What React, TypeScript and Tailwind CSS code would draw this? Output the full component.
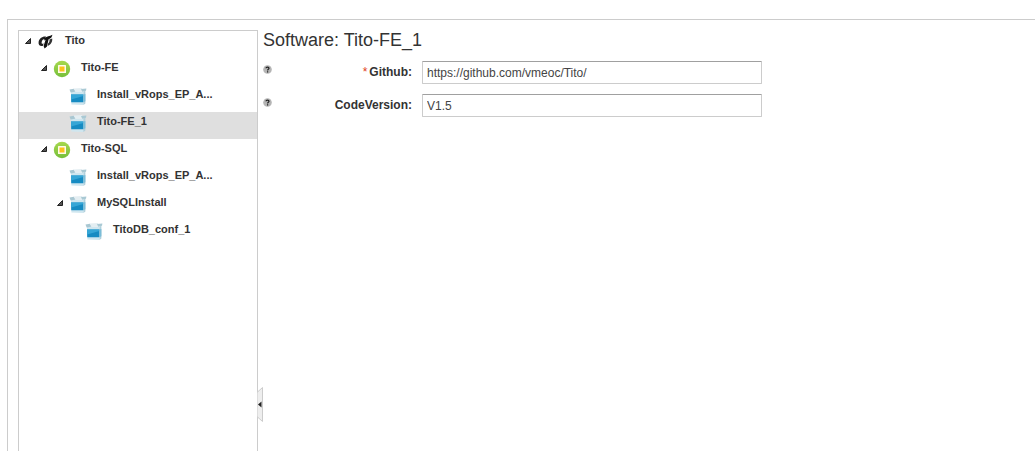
import { useState } from "react";

type NodeKind = "app" | "machine" | "software";

const Nodes: { id: number; name: string; kind: NodeKind; level: number; parent: boolean }[] = [
  { id: 1, name: "Tito", kind: "app", level: 0, parent: true },
  { id: 2, name: "Tito-FE", kind: "machine", level: 1, parent: true },
  { id: 3, name: "Install_vRops_EP_A...", kind: "software", level: 2, parent: false },
  { id: 4, name: "Tito-FE_1", kind: "software", level: 2, parent: false },
  { id: 5, name: "Tito-SQL", kind: "machine", level: 1, parent: true },
  { id: 6, name: "Install_vRops_EP_A...", kind: "software", level: 2, parent: false },
  { id: 7, name: "MySQLInstall", kind: "software", level: 2, parent: true },
  { id: 8, name: "TitoDB_conf_1", kind: "software", level: 3, parent: false },
];

const Fields = [
  { id: "github", label: "Github:", value: "https://github.com/vmeoc/Tito/", required: true },
  { id: "codeVersion", label: "CodeVersion:", value: "V1.5", required: false },
];

const Indents = ["pl-1.5", "pl-[22px]", "pl-[38px]", "pl-[54px]"];

function AppIcon() {
  return (
    <svg width="18" height="18" viewBox="0 0 18 18" fill="none">
      <path d="M9 3.6C5 3.2 2.2 5.8 1.6 9C1.2 12 3 13.6 6 12.8L6.6 10.6C4.8 11.2 4.2 10 4.8 8.4C5.4 6.8 6.6 6 8 6Z" fill="#222" />
      <path d="M15.4 1.8C12.6 3.6 9.8 3.2 7.8 5L7 7.4L8.6 6.8L6.6 13L7.6 15.6L10 13.6L11.6 6.2C13.8 5.6 15 4.2 15.4 1.8Z" fill="#111" />
      <path d="M12.4 6.6L15.2 5.4C15.6 8.8 13.8 11.8 10.6 12.8L11 10.6C12.2 9.6 12.8 8.2 12.4 6.6Z" fill="#333" />
    </svg>
  );
}

function MachineIcon() {
  return (
    <svg width="18" height="18" viewBox="0 0 18 18">
      <defs>
        <linearGradient id="machine" x1="0" y1="0" x2="0" y2="1">
          <stop offset="0" stopColor="#a6d84e" />
          <stop offset="1" stopColor="#76bf3a" />
        </linearGradient>
      </defs>
      <circle cx="9" cy="9" r="8.2" fill="url(#machine)" />
      <rect x="5" y="5" width="8" height="8" rx="0.5" fill="#fffbe8" />
      <rect x="6.5" y="6.5" width="5" height="5" fill="#fcc21c" />
    </svg>
  );
}

function SoftwareIcon() {
  return (
    <svg width="18" height="18" viewBox="0 0 18 18">
      <path d="M2 4.5H14.4V18L2.4 17.4Z" fill="#cfe6ef" />
      <path d="M14.4 4.5L16.4 3.8V16.6L14.4 18Z" fill="#b0d0dc" />
      <path d="M0.5 2.4L5 1.8L7 4.6L1.6 5.6Z" fill="#a9c7d2" />
      <path d="M4.5 1.6L13 1L13.5 4.8L6.5 5Z" fill="#e4eef2" />
      <path d="M12 2L17.4 1.4L17 3.8L13.2 4.8Z" fill="#a9c9d4" />
      <path d="M2 7.6H14.4V15.2H2.2Z" fill="#168bc2" />
      <path d="M2 7.6H14.4V9L2.1 12.6Z" fill="#35a6d6" />
      <path d="M14.4 7.6L16.4 7V14.2L14.4 15.2Z" fill="#7bbdd8" />
    </svg>
  );
}

const Icons = { app: AppIcon, machine: MachineIcon, software: SoftwareIcon };

function HelpIcon() {
  return (
    <svg width="9" height="9" viewBox="0 0 9 9" fill="none">
      <circle cx="4.5" cy="4.5" r="4.3" fill="#b5b5b5" />
      <path d="M3 3.3C3 1.7 6 1.7 6 3.3C6 4.3 4.6 4.2 4.6 5.4M4.6 6.3V7.4" stroke="#222" strokeWidth="1.2" />
    </svg>
  );
}

export default function App() {
  const [selected, setSelected] = useState(4);
  const [open, setOpen] = useState(true);

  return (
    <div
      className="flex min-h-screen flex-col bg-white pt-[19px] pl-[7px] text-[#333]"
      style={{ fontFamily: '"Liberation Sans", Arial, sans-serif' }}
    >
      <div className="flex flex-1 border-t border-l border-[#ccc] pt-2.5 pl-2.5">
        <aside className="relative w-60 shrink-0 border-x border-t border-[#ccc]">
          {open && (
            <ul>
              {Nodes.map(({ id, name, kind, level, parent }) => {
                const Icon = Icons[kind];
                return (
                  <li key={id}>
                    <button
                      onClick={() => setSelected(id)}
                      className={`flex h-[27px] w-full items-start pt-0.5 text-left text-[11px] leading-[14px] font-bold ${Indents[level]} ${selected === id ? "bg-[#dfdfdf]" : ""}`}
                    >
                      <span className="w-3 shrink-0 pt-[5px]">
                        {parent && (
                          <svg width="6" height="6" viewBox="0 0 6 6">
                            <path d="M5.5 0.5V5.5H0.5Z" fill="#555" stroke="#222" />
                          </svg>
                        )}
                      </span>
                      <Icon />
                      <span className="pl-2.5">{name}</span>
                    </button>
                  </li>
                );
              })}
            </ul>
          )}
          <button
            aria-label="Toggle tree"
            onClick={() => setOpen(!open)}
            className="absolute top-[356px] -right-1.5"
          >
            <svg width="6" height="35" viewBox="0 0 6 35">
              <path d="M0 5.5L5.5 0.5V34.5L0 29.5Z" fill="#eee" stroke="#ccc" />
              <path d="M1 17.5L4.5 14.5V20.5Z" fill="#222" />
            </svg>
          </button>
        </aside>

        <main className="min-w-0 flex-1 pr-4 pl-[5px]">
          <h1 className="text-lg leading-5">Software: Tito-FE_1</h1>
          <form className="flex flex-col gap-2.5 pt-[11px]">
            {Fields.map(({ id, label, value, required }) => (
              <div key={id} className="flex items-start">
                <span className="w-5 shrink-0 pt-1">
                  <HelpIcon />
                </span>
                <label htmlFor={id} className="w-[129px] shrink-0 text-right text-xs leading-[22px] font-bold">
                  {required && <span className="pr-0.5 font-normal text-[#e0401c]">*</span>}
                  {label}
                </label>
                <input
                  id={id}
                  type="text"
                  defaultValue={value}
                  className="ml-2.5 h-[23px] w-full max-w-[340px] rounded-[1px] border border-[#ccc] border-t-[#a0a0a0] px-1 text-xs text-[#444]"
                />
              </div>
            ))}
          </form>
        </main>
      </div>
    </div>
  );
}
